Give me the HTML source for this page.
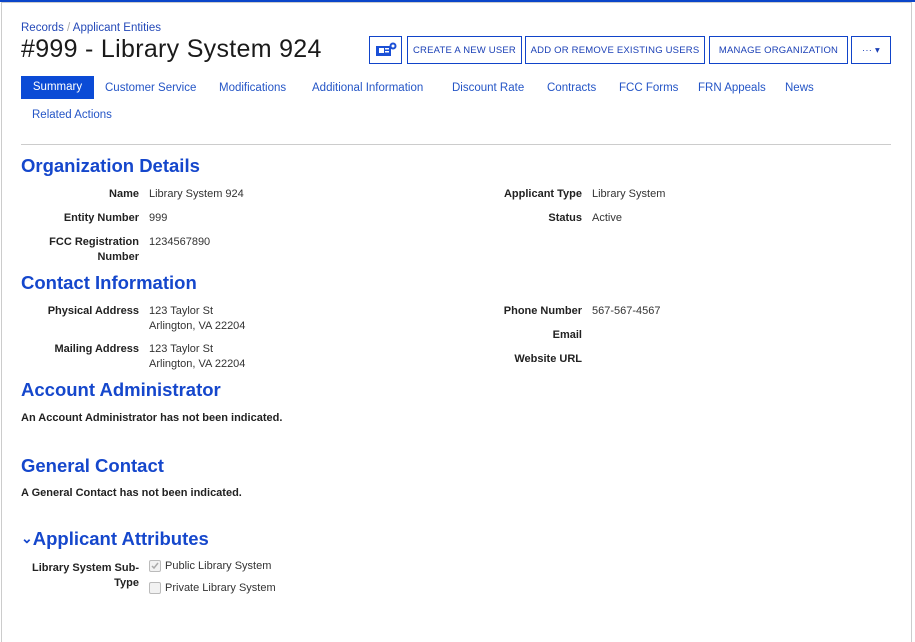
<!DOCTYPE html>
<html><head><meta charset="utf-8"><style>
*{margin:0;padding:0;box-sizing:border-box}
body{width:915px;height:623px;background:#fff;font-family:"Liberation Sans",sans-serif;position:relative;overflow:hidden;color:#222}
.a{position:absolute;white-space:nowrap}
.frame{position:absolute;left:1px;top:2px;width:911px;height:640px;border:1px solid #ccc;border-bottom:none}
.topbar{position:absolute;left:0;top:0;width:915px;height:2px;background:#0b45c9}
.bc{font-size:11.5px;color:#2449b8}
h1{position:absolute;left:21px;top:35px;font-size:25px;font-weight:normal;color:#1a1a1a;letter-spacing:.3px;white-space:nowrap}
.btn{position:absolute;top:36px;height:28px;border:1.5px solid #1144c9;color:#1b40b6;font-size:9.5px;letter-spacing:.2px;display:flex;align-items:center;justify-content:center;white-space:nowrap}
.tab{position:absolute;font-size:11.5px;color:#2455c6}
.h2{position:absolute;left:21px;font-size:18.5px;font-weight:bold;color:#1547cc}
.l{position:absolute;font-size:11px;font-weight:bold;text-align:right;color:#222;white-space:nowrap}
.v{position:absolute;font-size:11px;color:#333;line-height:15px}
.cb{position:absolute;left:149px;width:12px;height:12px;border:1px solid #bbb;background:#f2f2f2;border-radius:2px}
</style></head><body>
<div class="topbar"></div><div class="frame"></div>
<div class="a bc" style="left:21px;top:22px">Records <span style="color:#aaa">/</span> Applicant Entities</div>
<h1>#999 - Library System 924</h1>
<div class="btn" style="left:369px;width:33px"><svg width="24" height="16" viewBox="0 0 24 16"><rect x="2" y="4" width="15" height="10" fill="#1a4fd6"/><rect x="5" y="6" width="5" height="5" fill="#fff"/><rect x="11" y="6" width="4" height="1.5" fill="#fff"/><rect x="11" y="9" width="4" height="1.5" fill="#fff"/><circle cx="19" cy="4" r="3.5" fill="#1a4fd6"/><circle cx="19" cy="4" r="1.5" fill="#fff"/></svg></div>
<div class="btn" style="left:407px;width:115px">CREATE A NEW USER</div>
<div class="btn" style="left:525px;width:180px">ADD OR REMOVE EXISTING USERS</div>
<div class="btn" style="left:709px;width:139px">MANAGE ORGANIZATION</div>
<div class="btn" style="left:851px;width:40px">··· ▾</div>
<div class="a" style="left:21px;top:76px;width:73px;height:23px;background:#0b4bd6;color:#fff;font-size:11.5px;text-align:center;line-height:23px">Summary</div>
<div class="tab a" style="left:105px;top:82px">Customer Service</div>
<div class="tab a" style="left:219px;top:82px">Modifications</div>
<div class="tab a" style="left:312px;top:82px">Additional Information</div>
<div class="tab a" style="left:452px;top:82px">Discount Rate</div>
<div class="tab a" style="left:547px;top:82px">Contracts</div>
<div class="tab a" style="left:619px;top:82px">FCC Forms</div>
<div class="tab a" style="left:698px;top:82px">FRN Appeals</div>
<div class="tab a" style="left:785px;top:82px">News</div>
<div class="tab a" style="left:32px;top:109px">Related Actions</div>
<div class="a" style="left:21px;top:144px;width:870px;height:1px;background:#ccc"></div>

<div class="h2 a" style="top:155px">Organization Details</div>
<div class="l" style="right:776px;top:188px">Name</div><div class="v a" style="left:149px;top:187px">Library System 924</div>
<div class="l" style="right:776px;top:212px">Entity Number</div><div class="v a" style="left:149px;top:211px">999</div>
<div class="l" style="right:776px;top:235px;line-height:15px">FCC Registration<br>Number</div><div class="v a" style="left:149px;top:235px">1234567890</div>
<div class="l" style="right:333px;top:188px">Applicant Type</div><div class="v a" style="left:592px;top:187px">Library System</div>
<div class="l" style="right:333px;top:212px">Status</div><div class="v a" style="left:592px;top:211px">Active</div>

<div class="h2 a" style="top:272px">Contact Information</div>
<div class="l" style="right:776px;top:305px">Physical Address</div><div class="v a" style="left:149px;top:304px">123 Taylor St<br>Arlington, VA 22204</div>
<div class="l" style="right:776px;top:343px">Mailing Address</div><div class="v a" style="left:149px;top:342px">123 Taylor St<br>Arlington, VA 22204</div>
<div class="l" style="right:333px;top:305px">Phone Number</div><div class="v a" style="left:592px;top:304px">567-567-4567</div>
<div class="l" style="right:333px;top:329px">Email</div>
<div class="l" style="right:333px;top:353px">Website URL</div>

<div class="h2 a" style="top:379px">Account Administrator</div>
<div class="l a" style="left:21px;top:412px;text-align:left">An Account Administrator has not been indicated.</div>
<div class="h2 a" style="top:455px">General Contact</div>
<div class="l a" style="left:21px;top:487px;text-align:left">A General Contact has not been indicated.</div>
<div class="h2 a" style="top:528px"><span style="font-size:14px;position:relative;top:-2px">⌄</span>Applicant Attributes</div>
<div class="l" style="right:776px;top:561px;line-height:15px">Library System Sub-<br>Type</div>
<div class="cb" style="top:560px"><svg width="10" height="10" viewBox="0 0 10 10" style="position:absolute;left:0;top:0"><path d="M2 5l2 2 4-5" stroke="#aaa" stroke-width="1.5" fill="none"/></svg></div>
<div class="v a" style="left:165px;top:559px">Public Library System</div>
<div class="cb" style="top:582px"></div>
<div class="v a" style="left:165px;top:581px">Private Library System</div>
</body></html>
